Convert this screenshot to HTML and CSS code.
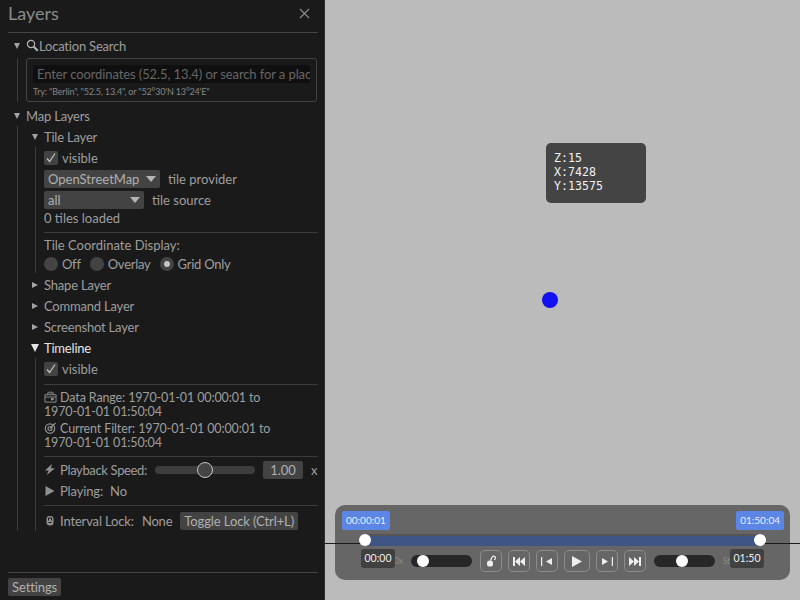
FILE: index.html
```html
<!DOCTYPE html>
<html lang="en">
<head>
    <meta charset="UTF-8">
    <title>Layers</title>
    <link rel="stylesheet" href="styles.css">
</head>
<body>
<div class="app">
    <aside class="sidebar">
        <header class="side-head">
            <h1>Layers</h1>
            <svg class="close" width="11" height="11" viewBox="0 0 11 11"><path d="M1 1l9 9M10 1l-9 9" stroke="#8a8a8a" stroke-width="1.2" fill="none"/></svg>
        </header>
        <div class="side-body">
            <div class="node-head">
                <span class="arrow down"></span>
                <svg class="ico-search" width="13" height="13" viewBox="0 0 13 13"><circle cx="5" cy="5" r="3.6" fill="none" stroke="#b5b5b5" stroke-width="1.2"/><path d="M7.8 7.8l4 4" stroke="#b5b5b5" stroke-width="2"/></svg>
                <span>Location Search</span>
            </div>
            <div class="node-body search-body">
                <div class="search-box">
                    <div class="search-input"><span>Enter coordinates (52.5, 13.4) or search for a place</span></div>
                    <div class="hint">Try: "Berlin", "52.5, 13.4", or "52°30'N 13°24'E"</div>
                </div>
            </div>

            <div class="node-head">
                <span class="arrow down"></span><span>Map Layers</span>
            </div>
            <div class="node-body">
                <div class="node-head">
                    <span class="arrow down"></span><span>Tile Layer</span>
                </div>
                <div class="node-body tile-body">
                    <label class="row"><span class="check"><svg width="14" height="14" viewBox="0 0 14 14"><path d="M3 7.5l2.6 3L11 2.5" stroke="#c4c4c4" stroke-width="1.2" fill="none"/></svg></span>visible</label>
                    <div class="row"><span class="select sel-provider">OpenStreetMap<i class="caret"></i></span><span>tile provider</span></div>
                    <div class="row"><span class="select sel-source">all<i class="caret"></i></span><span>tile source</span></div>
                    <div class="tiles-loaded">0 tiles loaded</div>
                    <hr class="sep sep-tile">
                    <div class="coord-title">Tile Coordinate Display:</div>
                    <div class="radios">
                        <span class="radio-item"><i class="radio"></i>Off</span>
                        <span class="radio-item"><i class="radio"></i>Overlay</span>
                        <span class="radio-item"><i class="radio on"></i>Grid Only</span>
                    </div>
                </div>
                <div class="node-head"><span class="arrow right"></span><span>Shape Layer</span></div>
                <div class="node-head"><span class="arrow right"></span><span>Command Layer</span></div>
                <div class="node-head"><span class="arrow right"></span><span>Screenshot Layer</span></div>
                <div class="node-head active"><span class="arrow down big"></span><span>Timeline</span></div>
                <div class="node-body">
                    <label class="row"><span class="check"><svg width="14" height="14" viewBox="0 0 14 14"><path d="M3 7.5l2.6 3L11 2.5" stroke="#c4c4c4" stroke-width="1.2" fill="none"/></svg></span>visible</label>
                    <hr class="sep sep-a">
                    <p class="info">
                        <svg class="inline-ico" width="13" height="12" viewBox="0 0 14 12"><path d="M1 3.5h12v8H1zM1 6h12M4 3.5V1.5h6v2M6 1V0M8 1V0" fill="none" stroke="#8f8f8f" stroke-width="1"/><rect x="7.5" y="7" width="3" height="2.5" fill="#8f8f8f"/></svg>
                        Data Range: 1970-01-01 00:00:01 to<br>1970-01-01 01:50:04
                    </p>
                    <p class="info info-two">
                        <svg class="inline-ico" width="13" height="12" viewBox="0 0 13 12"><circle cx="6" cy="6.5" r="4.7" fill="none" stroke="#8f8f8f" stroke-width="1.2"/><circle cx="6" cy="6.5" r="2" fill="none" stroke="#8f8f8f" stroke-width="1.2"/><path d="M6 6.5L11.5 1" stroke="#8f8f8f" stroke-width="1.3"/></svg>
                        Current Filter: 1970-01-01 00:00:01 to<br>1970-01-01 01:50:04
                    </p>
                    <hr class="sep sep-b">
                    <div class="row">
                        <svg class="lead-ico" width="10" height="11" viewBox="0 0 10 11"><path d="M7 0L0 6.5h3.6L1.8 11 10 4.3H6z" fill="#8f8f8f"/></svg>
                        <span class="lead-label speed-label">Playback Speed:</span>
                        <span class="side-slider"><i class="side-thumb"></i></span>
                        <span class="num-input">1.00</span>
                        <span>x</span>
                    </div>
                    <div class="row">
                        <svg class="lead-ico" width="9" height="10" viewBox="0 0 9 10"><path d="M0 0l9 5-9 5z" fill="#8f8f8f"/></svg>
                        <span class="lead-label">Playing:</span>
                        <span class="playing-val">No</span>
                    </div>
                    <hr class="sep sep-c">
                    <div class="row row-last">
                        <svg class="lead-ico" width="8" height="11" viewBox="0 0 8 11"><rect x="0.5" y="1" width="7" height="9.5" rx="3" fill="#8f8f8f"/><path d="M2.5 5.5V3h3v2.5M2.5 7.5h3" stroke="#1a1a1a" stroke-width="1" fill="none"/></svg>
                        <span class="lead-label">Interval Lock:</span>
                        <span class="lock-val">None</span>
                        <span class="btn">Toggle Lock (Ctrl+L)</span>
                    </div>
                </div>
            </div>
        </div>
        <footer class="side-foot"><span class="btn">Settings</span></footer>
    </aside>

    <main class="map">
        <div class="coord-tip">Z:15<br>X:7428<br>Y:13575</div>
        <div class="dot"></div>

        <section class="timeline">
            <div class="cursor-line"></div>
            <div class="stamps"><span class="stamp">00:00:01</span><span class="stamp">01:50:04</span></div>
            <div class="track">
                <i class="knob knob-l"></i>
                <i class="knob knob-r"></i>
            </div>
            <div class="controls">
                <span class="faint faint-l">Speed: 1.0x</span>
                <span class="mini-slider"><i class="mini-thumb thumb-speed"></i></span>
                <button class="tbtn"><svg width="12" height="14" viewBox="0 0 12 14"><path d="M5.5 6.5L7 3.2a1.7 1.7 0 0 1 3.2 1.3L9.5 6" fill="none" stroke="#eee" stroke-width="1.3"/><rect x="2" y="6.5" width="6" height="6" rx="2.6" fill="#eee"/></svg></button>
                <button class="tbtn"><svg width="12" height="9" viewBox="0 0 12 9"><path d="M0 0h2v9H0zM7 0v9L2 4.5zM12 0v9L7 4.5z" fill="#eee"/></svg></button>
                <button class="tbtn"><svg width="12" height="9" viewBox="0 0 12 9"><path d="M0 0h1.2v9H0zM11 1v7L5 4.5z" fill="#eee"/></svg></button>
                <button class="tbtn tbtn-play"><svg width="10" height="11" viewBox="0 0 10 11"><path d="M0 0l10 5.5L0 11z" fill="#eee"/></svg></button>
                <button class="tbtn"><svg width="12" height="9" viewBox="0 0 12 9"><path d="M1 1v7l6-3.5zM10.8 0H12v9h-1.2z" fill="#eee"/></svg></button>
                <button class="tbtn"><svg width="12" height="9" viewBox="0 0 12 9"><path d="M0 0v9l5-4.5zM5 0v9l5-4.5zM10 0h2v9h-2z" fill="#eee"/></svg></button>
                <span class="mini-slider"><i class="mini-thumb thumb-step"></i></span>
                <span class="faint faint-r">Step: 1m</span>
            </div>
            <span class="time-tip tip-l">00:00</span>
            <span class="time-tip tip-r">01:50</span>
        </section>
    </main>
</div>
</body>
</html>
```

FILE: styles.css
```css
* {
    box-sizing: border-box;
}
body {
    margin: 0;
    font-family: 'Lato', 'Noto Sans', sans-serif;
    font-size: 13px;
    color: #9e9e9e;
}
.app {
    display: flex;
    width: 800px;
    height: 600px;
    overflow: hidden;
}

/* sidebar */
.sidebar {
    width: 325px;
    height: 600px;
    background-color: #1a1a1a;
    border-right: 1px solid #2e2e2e;
    padding: 0 6px 0 8px;
    display: flex;
    flex-direction: column;
}
.side-head {
    height: 33px;
    border-bottom: 1px solid #444;
    display: flex;
    align-items: center;
    justify-content: space-between;
    padding: 0 8px 6px 0;
}
.side-head h1 {
    margin: 0;
    font-size: 18px;
    font-weight: 400;
    color: #8a8a8a;
}
.side-body {
    flex: 1;
    padding-top: 2px;
}
.node-head {
    height: 21px;
    display: flex;
    align-items: center;
    letter-spacing: -0.2px;
}
.node-head.active {
    color: #e4e4e4;
}
.arrow {
    width: 18px;
    flex: none;
    position: relative;
    height: 10px;
}
.arrow::before {
    content: "";
    position: absolute;
    left: 6px;
    top: 2px;
    border-style: solid;
    border-color: transparent;
}
.arrow.down::before {
    border-width: 6px 3px 0;
    border-top-color: #a3a3a3;
}
.arrow.down.big::before {
    left: 5px;
    top: 1px;
    border-width: 8px 4px 0;
    border-top-color: #e4e4e4;
}
.arrow.right::before {
    left: 6px;
    border-width: 3px 0 3px 6px;
    border-left-color: #a3a3a3;
}
.ico-search {
    flex: none;
}
.node-body {
    margin-left: 9px;
    padding-left: 8px;
    border-left: 1px solid #3c3c3c;
}
.search-body {
    margin-top: 2px;
    margin-bottom: 3px;
}
.search-box {
    height: 44px;
    margin-right: 1px;
    border: 1px solid #444;
    border-radius: 3px;
    padding: 6px;
}
.search-input {
    height: 18px;
    background-color: #0f0f0f;
    border-radius: 3px;
    padding: 0 3px 0 4px;
    line-height: 19px;
    color: #666;
    overflow: hidden;
    white-space: nowrap;
    letter-spacing: -0.1px;
}
.hint {
    font-size: 9px;
    line-height: 15px;
    padding-top: 1px;
    color: #858585;
    letter-spacing: -0.16px;
}
.row {
    height: 21px;
    display: flex;
    align-items: center;
}
.row-last {
    margin-bottom: -3px;
}
.check {
    width: 14px;
    height: 14px;
    background-color: #434343;
    border-radius: 2px;
    margin-right: 4px;
    display: flex;
}
.select {
    height: 18px;
    background-color: #434343;
    border-radius: 2px;
    padding: 0 4px;
    color: #b0b0b0;
    display: flex;
    align-items: center;
    justify-content: space-between;
    margin-right: 8px;
}
.sel-provider {
    width: 116px;
}
.sel-source {
    width: 100px;
}
.caret {
    border-style: solid;
    border-color: transparent;
    border-width: 6px 5px 0;
    border-top-color: #b5b5b5;
}
.tiles-loaded {
    height: 17px;
    line-height: 17px;
}
.sep {
    border: 0;
    border-top: 1px solid #3c3c3c;
    margin: 0;
}
.sep-tile {
    margin-top: 5px;
}
.coord-title {
    height: 18px;
    margin-top: 3px;
    line-height: 18px;
}
.radios {
    display: flex;
    height: 19px;
    align-items: center;
    gap: 9px;
    letter-spacing: -0.25px;
}
.radio-item {
    display: flex;
    align-items: center;
}
.radio {
    width: 14px;
    height: 14px;
    border-radius: 50%;
    background-color: #434343;
    margin-right: 4px;
    position: relative;
}
.radio.on::after {
    content: "";
    position: absolute;
    left: 4px;
    top: 4px;
    width: 6px;
    height: 6px;
    border-radius: 50%;
    background-color: #c4c4c4;
}
.tile-body {
    margin-bottom: 1px;
}
.sep-a {
    margin-top: 5px;
}
.info {
    margin: 6px 0 0;
    font-size: 12.5px;
    letter-spacing: -0.13px;
    line-height: 14px;
}
.info-two {
    margin-top: 3px;
}
.inline-ico {
    vertical-align: -1px;
}
.sep-b {
    margin-top: 6px;
    margin-bottom: 2px;
}
.sep-c {
    margin-top: 4px;
    margin-bottom: 4px;
}
.lead-ico {
    width: 12px;
    flex: none;
    margin-right: 4px;
}
.lead-label {
    margin-right: 8px;
    white-space: nowrap;
    letter-spacing: -0.15px;
}
.speed-label {
    width: 87px;
    flex: none;
    letter-spacing: -0.35px;
}
.side-slider {
    width: 100px;
    flex: none;
    height: 8px;
    background-color: #3d3d3d;
    border-radius: 4px;
    position: relative;
    margin-right: 8px;
}
.side-thumb {
    position: absolute;
    left: 42px;
    top: -4px;
    width: 16px;
    height: 16px;
    border-radius: 50%;
    background-color: #444;
    border: 1px solid #c4c4c4;
}
.num-input {
    width: 40px;
    flex: none;
    height: 18px;
    background-color: #434343;
    border-radius: 2px;
    text-align: center;
    line-height: 18px;
    color: #b0b0b0;
    margin-right: 8px;
}
.playing-val {
    margin-left: -1px;
}
.lock-val {
    margin-right: 8px;
    letter-spacing: -0.2px;
}
.btn {
    background-color: #434343;
    border-radius: 2px;
    padding: 0 4px;
    height: 18px;
    line-height: 18px;
    color: #b0b0b0;
    letter-spacing: -0.1px;
}
.side-foot {
    height: 28px;
    border-top: 1px solid #444;
    padding-top: 5px;
    display: flex;
    align-items: flex-start;
}

/* map area */
.map {
    flex: 1;
    position: relative;
    background-color: #bcbbbc;
}
.coord-tip {
    position: absolute;
    left: 221px;
    top: 143px;
    width: 100px;
    height: 60px;
    background-color: #444;
    border-radius: 5px;
    padding: 8px;
    font-family: 'DejaVu Sans Mono', monospace;
    font-size: 11.6px;
    line-height: 14px;
    color: #f2f2f2;
}
.dot {
    position: absolute;
    left: 217px;
    top: 292px;
    width: 16px;
    height: 16px;
    border-radius: 50%;
    background-color: #1212f0;
}

/* timeline overlay */
.timeline {
    position: absolute;
    left: 10px;
    top: 505px;
    width: 455px;
    height: 75px;
    background-color: #666;
    border-radius: 10px;
    padding: 6px 6px 0 7px;
}
.cursor-line {
    position: absolute;
    left: -10px;
    right: -10px;
    top: 38px;
    height: 1px;
    background-color: #1c1c1c;
}
.stamps {
    display: flex;
    justify-content: space-between;
}
.stamp {
    height: 19px;
    line-height: 19px;
    padding: 0 4px;
    background-color: #5b86e5;
    border-radius: 2px;
    color: #eef;
    font-size: 10px;
}
.track {
    position: relative;
    height: 12px;
    margin: 4px 24px 0 23px;
    background-color: #3f5583;
    border-top: 2px solid #555;
}
.knob {
    position: absolute;
    top: -2px;
    width: 12px;
    height: 12px;
    border-radius: 50%;
    background-color: #fff;
}
.knob-l {
    left: -6px;
}
.knob-r {
    right: -6px;
}
.controls {
    display: flex;
    justify-content: center;
    align-items: center;
    gap: 6px;
    height: 22px;
    margin-top: 4px;
}
.faint {
    width: 50px;
    font-size: 8.5px;
    letter-spacing: -0.2px;
    color: #8a8a8a;
    white-space: nowrap;
}
.faint-l {
    text-align: right;
}
.mini-slider {
    width: 61px;
    height: 12px;
    border-radius: 6px;
    background-color: #272727;
    position: relative;
    margin: 0 2px;
}
.mini-thumb {
    position: absolute;
    top: 0;
    width: 12px;
    height: 12px;
    border-radius: 50%;
    background-color: #fff;
}
.thumb-speed {
    left: 6px;
}
.thumb-step {
    left: 22px;
}
.tbtn {
    width: 22px;
    height: 22px;
    padding: 0;
    border: 1px solid #8c8c8c;
    border-radius: 5px;
    background-color: transparent;
    display: flex;
    align-items: center;
    justify-content: center;
}
.tbtn-play {
    width: 26px;
}
.time-tip {
    position: absolute;
    top: 44px;
    width: 34px;
    height: 19px;
    line-height: 19px;
    background-color: rgba(60, 60, 60, 0.9);
    border-radius: 3px;
    text-align: center;
    color: #eee;
    font-size: 10.5px;
}
.tip-l {
    left: 26px;
}
.tip-r {
    left: 395px;
}
```
